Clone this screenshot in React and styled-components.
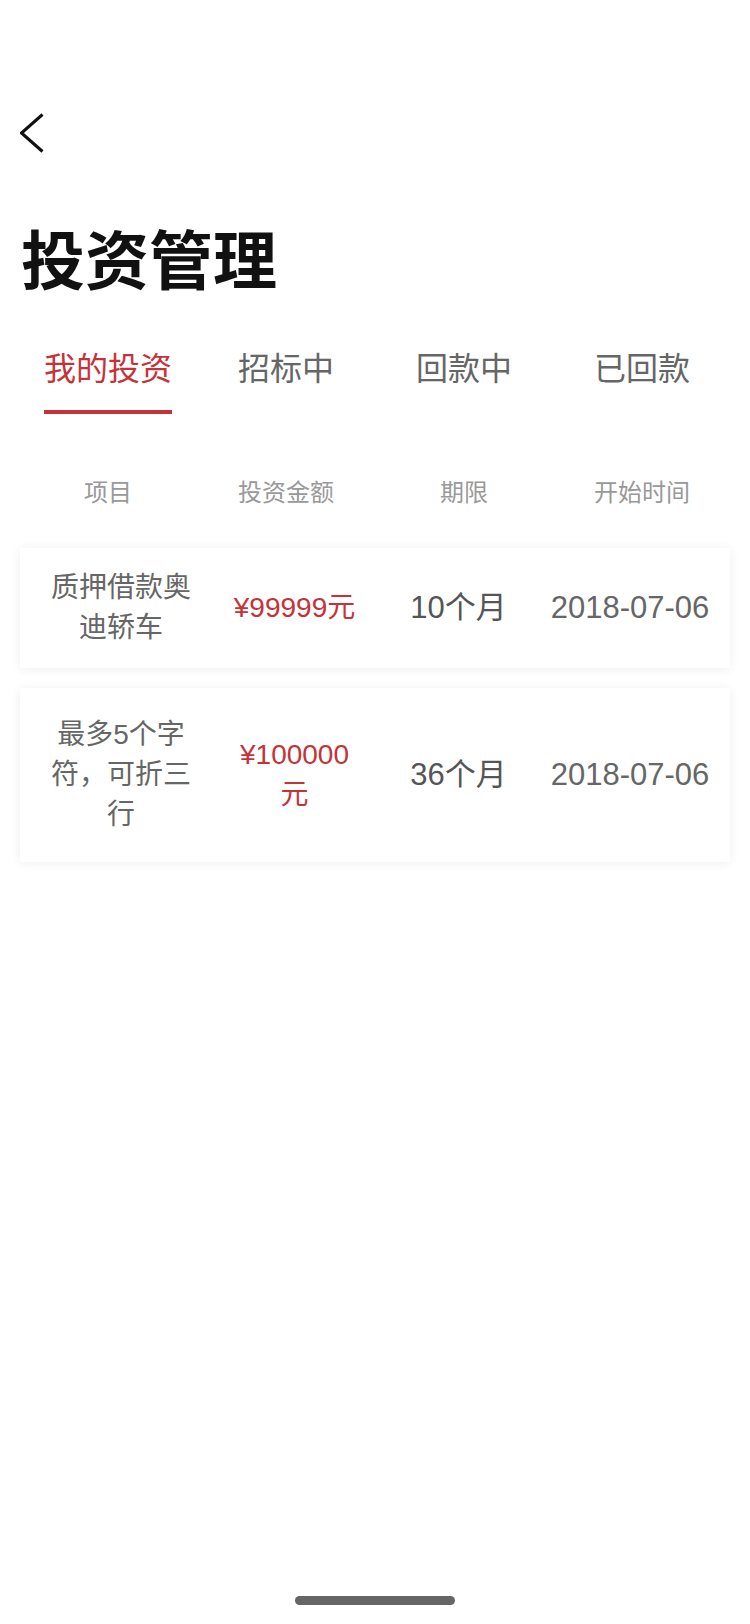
import React from 'react'
import styled, { createGlobalStyle } from 'styled-components'

const GlobalStyle = createGlobalStyle`
    html, body {
        margin: 0;
        padding: 0;
        background: #fff;
    }
    body {
        font-family: "Liberation Sans", "Noto Sans CJK SC", sans-serif;
    }
`

const tabs = ['我的投资', '招标中', '回款中', '已回款']
const columns = ['项目', '投资金额', '期限', '开始时间']

const rows = [
    { name: '质押借款奥迪轿车', amount: '¥99999元', term: '10个月', date: '2018-07-06', height: 120 },
    { name: '最多5个字符，可折三行', amount: '¥100000元', term: '36个月', date: '2018-07-06', height: 174 },
]

function App() {
    return (
        <Page>
            <GlobalStyle />
            <NavBar>
                <BackButton aria-label="返回">
                    <svg width="24" height="40" viewBox="0 0 24 40" fill="none">
                        <path d="M22.5 1.5 L1.5 20 L22.5 38.5" stroke="#111" strokeWidth="3" />
                    </svg>
                </BackButton>
            </NavBar>

            <Title>投资管理</Title>

            <Tabs>
                {tabs.map((t, i) => (
                    <Tab key={t}>
                        <TabLabel $active={i === 0}>{t}</TabLabel>
                    </Tab>
                ))}
            </Tabs>

            <HeaderRow>
                {columns.map(c => <HeaderCell key={c}>{c}</HeaderCell>)}
            </HeaderRow>

            <List>
                {rows.map((r, i) => (
                    <Card key={i} $minHeight={r.height}>
                        <NameCell>{r.name}</NameCell>
                        <AmountCell>{r.amount}</AmountCell>
                        <TermCell>{r.term}</TermCell>
                        <DateCell>{r.date}</DateCell>
                    </Card>
                ))}
            </List>

            <HomeBar>
                <HomeIndicator />
            </HomeBar>
        </Page>
    )
}

export default App

const Page = styled.div`
    min-height: 1624px;
    display: flex;
    flex-direction: column;
    background: #fff;
`

const NavBar = styled.div`
    padding: 113px 0 0 20px;
    height: 40px;
`

const BackButton = styled.div`
    width: 24px;
    height: 40px;
    svg {
        display: block;
    }
`

const Title = styled.h1`
    margin: 77px 0 0 21px;
    font-size: 64px;
    line-height: 64px;
    font-weight: 700;
    color: #111;
`

const Tabs = styled.div`
    margin-top: 59px;
    padding: 0 19px;
    display: grid;
    grid-template-columns: repeat(4, 1fr);
`

const Tab = styled.div`
    display: flex;
    justify-content: center;
`

const TabLabel = styled.span`
    font-size: 32px;
    line-height: 32px;
    padding-bottom: 25px;
    color: ${p => (p.$active ? '#c5333a' : '#666')};
    border-bottom: 4px solid ${p => (p.$active ? '#c5333a' : 'transparent')};
`

const HeaderRow = styled.div`
    margin-top: 67px;
    padding: 0 19px;
    display: grid;
    grid-template-columns: repeat(4, 1fr);
`

const HeaderCell = styled.div`
    text-align: center;
    font-size: 24px;
    line-height: 24px;
    color: #999;
`

const List = styled.div`
    margin: 43px 20px 0;
    display: flex;
    flex-direction: column;
    gap: 20px;
`

const Card = styled.div`
    min-height: ${p => p.$minHeight}px;
    box-sizing: border-box;
    padding: 20px 20px 20px 0;
    background: #fff;
    box-shadow: 0 1px 10px rgba(0, 0, 0, 0.07);
    display: grid;
    grid-template-columns: 202px 145px 183px 160px;
    align-items: center;
`

const Cell = styled.div`
    text-align: center;
    font-size: 28px;
    line-height: 40px;
    color: #666;
`

const NameCell = styled(Cell)`
    padding: 0 26px;
`

const AmountCell = styled(Cell)`
    padding: 0 7px;
    color: #c5333a;
`

const TermCell = styled(Cell)`
    font-size: 31px;
    color: #555;
    white-space: nowrap;
`

const DateCell = styled(Cell)`
    font-size: 31px;
    white-space: nowrap;
`

const HomeBar = styled.div`
    margin-top: auto;
    padding-bottom: 19px;
    display: flex;
    justify-content: center;
`

const HomeIndicator = styled.div`
    width: 160px;
    height: 9px;
    border-radius: 5px;
    background: #666;
`
